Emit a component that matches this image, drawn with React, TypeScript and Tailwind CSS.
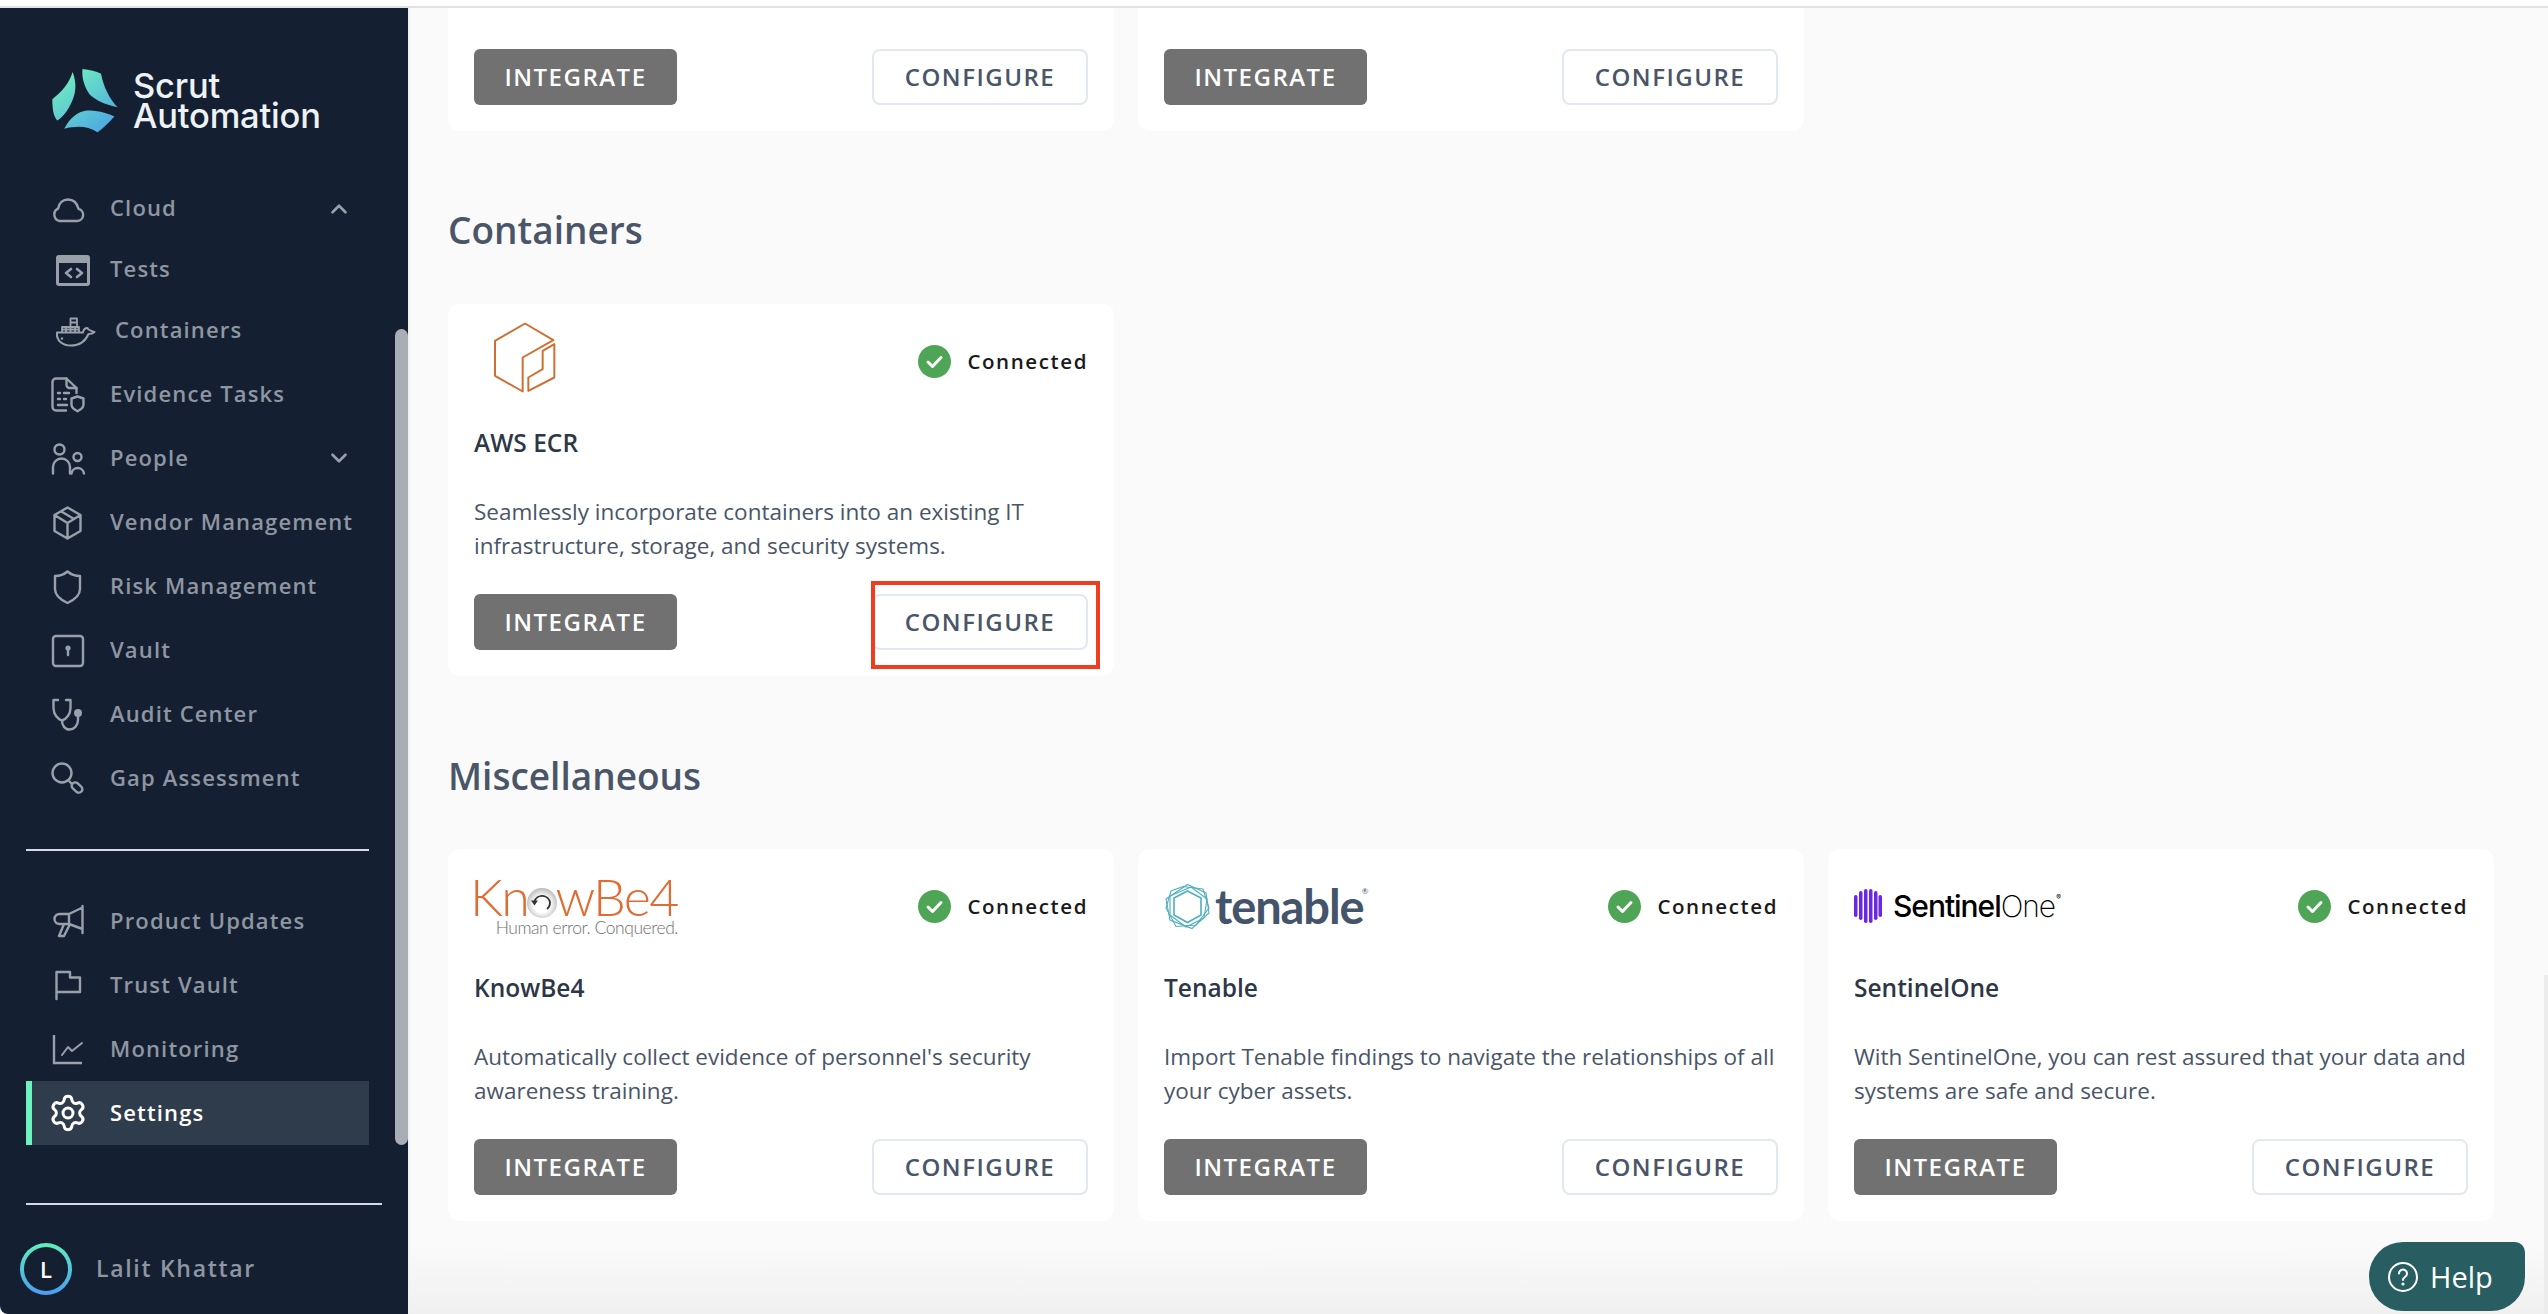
import { ReactNode } from 'react';
import { ChevronDown, ChevronUp, Settings } from 'lucide-react';

// every nav glyph sits in the same 44x36 box, so the paths share one origin
const Glyph = ({ children }: { children: ReactNode }) => (
  <svg width="44" height="36" viewBox="0 0 44 36" fill="none" stroke="currentColor" strokeWidth="2.4" strokeLinecap="round" strokeLinejoin="round" className="shrink-0 overflow-visible">
    {children}
  </svg>
);

const icons: Record<string, ReactNode> = {
  cloud: <path d="M9 30H26a6.2 6.2 0 0 0 1.5-12.2C26 12 22 8.500 17 8.500c-5 0-9 3.500-10 9.200A6.500 6.500 0 0 0 9 30Z" />,
  tests: (
    <>
      <rect x="6.500" y="4.500" width="31" height="28" rx="1.500" strokeWidth="3" />
      <path d="M6.500 8h31" strokeWidth="6" strokeLinecap="butt" />
      <path d="M20 17l-5 4 5 4M26 17l5 4-5 4" strokeWidth="2.600" />
    </>
  ),
  docker: (
    <>
      <path d="M6 19.500h26c.5-3 2.500-4.500 4.500-4.500.5 2 2.500 2.500 7 4-1.500 1.500-3.500 2-6 2-3 7-9.500 11.500-17.500 11.500C12 32.500 5 28 6 19.500Z" strokeWidth="2" />
      <path d="M11 19v-5h17v5M11 16.500h17M15 14v5M19.500 14v5M24 14v5M19.500 14V5.500H26V14M19.500 9.500H26" strokeWidth="1.800" />
      <circle cx="11" cy="25.500" r="1.200" fill="currentColor" stroke="none" />
    </>
  ),
  evidence: (
    <>
      <path d="M15 34.500H5a3.500 3.500 0 0 1-3.500-3.500V6A3.500 3.500 0 0 1 5 2.500h10.500L25.500 12v5" />
      <path d="M15.500 2.500V9a3 3 0 0 0 3 3h7M7 17h2M13 17h5M7 23h2M13 23h2M7 29h9" />
      <path d="M20.500 22.500l6-2 6 2v6c0 3-2.500 5-6 6.800-3.500-1.800-6-3.800-6-6.800Z" />
    </>
  ),
  people: (
    <>
      <circle cx="8.500" cy="9.500" r="5" />
      <path d="M2 33.500V27a8.500 8.500 0 0 1 17 0v6.500" />
      <circle cx="26.500" cy="17" r="4" />
      <path d="M20.500 33.500a6.300 6.300 0 0 1 12.500 0" />
    </>
  ),
  vendor: <path d="M16.500 3.500 29.500 11v16l-13 7.500-13-7.500V11ZM3.500 11l13 8 13-8M16.500 19v15.500M10 7.300 23 15" />,
  risk: <path d="M16.500 3.500c3.500 3 8.500 4.500 12.500 4.500v13c0 6-6 11-12.500 14C10 32 4 27 4 21V8c4 0 9-1.500 12.500-4.500Z" />,
  vault: (
    <>
      <rect x="2" y="4" width="30" height="30" rx="3" />
      <circle cx="17" cy="16" r="2.600" fill="currentColor" stroke="none" />
      <path d="M17 17v6" />
    </>
  ),
  audit: (
    <>
      <path d="M7 4H2.500v8c0 6 4 11 8.500 12.500 4.500-1.500 8.500-6.500 8.500-12.500V4H15" />
      <path d="M11 24.500c0 5 3 9 7.500 9s8.500-4 8.500-9.500v-4" />
      <circle cx="27" cy="17" r="4" fill="currentColor" stroke="none" />
    </>
  ),
  gap: (
    <>
      <circle cx="11" cy="13" r="9.500" />
      <path d="M18 21l3 3" />
      <rect x="20" y="24" width="12" height="7" rx="3.500" transform="rotate(42 26 27.500)" />
    </>
  ),
  updates: <path d="M31.500 3v27M31.500 4.500 18 11H8.500a4.500 4.500 0 0 0 0 10H18l13.500 5M18 11v10M13 21 8 33h5l6-12" />,
  trust: <path d="M5.500 32V5H19v5.500h10V25H5.500" />,
  monitoring: (
    <>
      <path d="M3 4v28h28" strokeLinecap="butt" strokeLinejoin="miter" />
      <path d="M11 24l6-8 4 4 10-8" strokeWidth="2" />
    </>
  ),
};

const navTop = [
  { id: 'cloud', label: 'Cloud', chevron: 'up', h: 'h-[61px]' },
  { id: 'tests', label: 'Tests', h: 'h-[61px]' },
  { id: 'docker', label: 'Containers', h: 'h-[61px] mb-[1px]', wide: true },
  { id: 'evidence', label: 'Evidence Tasks' },
  { id: 'people', label: 'People', chevron: 'down' },
  { id: 'vendor', label: 'Vendor Management' },
  { id: 'risk', label: 'Risk Management' },
  { id: 'vault', label: 'Vault' },
  { id: 'audit', label: 'Audit Center' },
  { id: 'gap', label: 'Gap Assessment' },
];

const navBottom = [
  { id: 'updates', label: 'Product Updates' },
  { id: 'trust', label: 'Trust Vault' },
  { id: 'monitoring', label: 'Monitoring' },
];

type NavEntry = { id: string; label: string; chevron?: string; h?: string; wide?: boolean };

function NavRow({ item }: { item: NavEntry }) {
  return (
    <div className={`flex w-[352px] items-center pl-[51px] ${item.h || 'h-[64px]'}`}>
      <div className={`text-[#9aa0aa] ${item.wide ? 'w-[64px]' : 'w-[59px]'} shrink-0`}>
        <Glyph>{icons[item.id]}</Glyph>
      </div>
      <span className="pb-[2px] text-[22px] font-semibold tracking-[1.15px] text-[#8f96a1] whitespace-nowrap">{item.label}</span>
      {item.chevron === 'up' && <ChevronUp size={26} strokeWidth={2.4} className="ml-auto text-[#9aa0aa]" />}
      {item.chevron === 'down' && <ChevronDown size={26} strokeWidth={2.4} className="ml-auto text-[#9aa0aa]" />}
    </div>
  );
}

function ScrutLogo() {
  return (
    <div className="flex h-[64px] items-center pl-[51px]">
      <svg width="68" height="67" viewBox="60 50 205 200" className="shrink-0">
        <defs>
          <linearGradient id="scrut" gradientUnits="userSpaceOnUse" x1="90" y1="60" x2="230" y2="250">
            <stop offset="0" stopColor="#72f2bd" />
            <stop offset="1" stopColor="#4ca4e4" />
          </linearGradient>
        </defs>
        <path fill="url(#scrut)" d="M155 55C178 58 196 62 211 69C217 105 236 145 261 170C225 163 195 150 176 131C160 108 152 80 155 55Z" />
        <path fill="url(#scrut)" d="M125 64C137 95 137 125 122 155C112 178 98 198 79 210C70 200 64 185 64 146C90 125 115 100 125 64Z" />
        <path fill="url(#scrut)" d="M100 235C115 205 140 183 168 180C195 180 225 185 251 198C235 215 220 232 200 246C170 225 135 227 100 235Z" />
      </svg>
      <div className="mt-[1px] ml-[14px] font-['Inter',sans-serif] text-[34.500px] leading-[30px] font-medium tracking-[-0.2px] text-[#eef2f7]">
        <div>Scrut</div>
        <div>Automation</div>
      </div>
    </div>
  );
}

function Sidebar() {
  return (
    <aside className="relative flex h-full w-[410px] shrink-0 flex-col rounded-bl-lg border-r-2 border-[#f1f1f1] bg-[#142032] pt-[60px]">
      <ScrutLogo />
      <nav className="mt-[46px]">
        {navTop.map((item) => (
          <NavRow key={item.id} item={item} />
        ))}
      </nav>
      <div className="mt-[39px] ml-[26px] h-[2px] w-[343px] bg-[#d5dbe6]" />
      <div className="mt-[38px]">
        {navBottom.map((item) => (
          <NavRow key={item.id} item={item} />
        ))}
        <div className="ml-[26px] flex h-[64px] w-[343px] items-center border-l-[6px] border-[#6ef3bf] bg-[#2f3c4b] pl-[16px] text-white">
          <Settings size={40} strokeWidth={1.8} className="shrink-0" />
          <span className="ml-[22px] pb-[2px] text-[22px] font-semibold tracking-[1.15px]">Settings</span>
        </div>
      </div>
      <div className="mt-[58px] ml-[26px] h-[2px] w-[356px] bg-[#d5dbe6]" />
      <div className="mt-[38px] flex items-center pl-[20px]">
        <div className="flex h-[52px] w-[52px] items-center justify-center rounded-full bg-gradient-to-b from-[#63efb9] to-[#4c9bef] p-[4px]">
          <div className="flex h-full w-full items-center justify-center rounded-full bg-[#142032] text-[22px] font-semibold text-white">L</div>
        </div>
        <span className="ml-[24px] pb-[2px] text-[23px] font-semibold tracking-[1.7px] text-[#8f96a1]">Lalit Khattar</span>
      </div>
      {/* sidebar scroll thumb */}
      <div className="absolute top-[321px] left-[395px] h-[816px] w-[13px] rounded-full bg-[#a9adb5]" />
    </aside>
  );
}

const EcrLogo = () => (
  <svg width="70" height="77" viewBox="60 30 210 230" fill="none" stroke="#cf7033" strokeWidth="6" strokeLinejoin="round" className="ml-[16px] -mt-[7px]">
    <path d="M165 43 250 93 158 145V247L75 200V95Z" />
    <path d="M175 205 218 180V125L253 105V205L175 245Z" />
  </svg>
);

const KnowBe4Logo = () => (
  <div className="w-[204px] font-['Lato',sans-serif] leading-none">
    <div className="-ml-[4px] flex h-[40px] items-baseline text-[52px] leading-[40px] font-light tracking-[-1.7px] text-[#e06c33] whitespace-nowrap">
      Kn
      <span className="relative text-transparent">
        o
        <svg width="30" height="30" viewBox="0 0 30 30" className="absolute top-[12px] left-[-1px]">
          <defs>
            <radialGradient id="kb4" cx="0.5" cy="0.55" r="0.55">
              <stop offset="0.5" stopColor="#ffffff" />
              <stop offset="1" stopColor="#b9b9b9" />
            </radialGradient>
          </defs>
          <circle cx="15" cy="15" r="15" fill="url(#kb4)" />
          <path d="M7.500 13.500a8 8 0 0 1 15.500 1c0 3-1 5-3 6.500" fill="none" stroke="#333" strokeWidth="1.800" />
          <path d="M4 12.500h7l-3.500 5Z" fill="#333" />
        </svg>
      </span>
      wBe4
    </div>
    <div className="mt-[3px] text-right text-[17.500px] font-light tracking-[-0.45px] text-[#6f6f6f] whitespace-nowrap">Human error. Conquered.</div>
  </div>
);

const TenableLogo = () => (
  <div className="flex items-center">
    <svg width="47" height="47" viewBox="0 0 47 47" fill="none" stroke="#4fb0bd" strokeWidth="1.100" className="shrink-0">
      <path d="M23.500 1.500 42 10l3 20-17 15.500L6 37 2 16Z" />
      <path d="M19 3.500 39 6l6 19-13 17-20 1.500L2 25l5-17Z" />
      <path d="M27 4 43 16l-3 19-18 9L6 32V13Z" />
      <path d="M23.500 8 37 15v17l-13.500 7.500L10 32V15Z" strokeWidth="1.600" />
    </svg>
    <span className="relative ml-[4px] font-['Lato',sans-serif] text-[47px] leading-[47px] font-bold tracking-[-1.1px] text-[#44546a]">
      tenable<span className="absolute top-[4px] -right-[5px] text-[8px] leading-none font-normal tracking-normal">®</span>
    </span>
  </div>
);

const SentinelLogo = () => (
  <div className="flex items-center">
    <svg width="28" height="34" viewBox="0 0 28 34" fill="#6b27e8" className="shrink-0">
      <rect x="0" y="6" width="3.500" height="22" rx="1.700" />
      <rect x="5" y="2" width="3.500" height="29" rx="1.700" />
      <rect x="10" y="0" width="3.500" height="34" rx="1.700" />
      <rect x="15" y="0" width="3.500" height="34" rx="1.700" />
      <rect x="20" y="2" width="3.500" height="29" rx="1.700" />
      <rect x="24.500" y="6" width="3.500" height="22" rx="1.700" />
    </svg>
    <span className="relative ml-[11px] font-['Inter',sans-serif] text-[30px] leading-none tracking-[-1.05px] text-black whitespace-nowrap">
      <span className="font-medium">Sentinel</span>
      <span className="font-extralight">One</span>
      <span className="absolute top-[3px] -right-[6px] text-[7px] leading-none tracking-normal">®</span>
    </span>
  </div>
);

type Integration = { title: string; desc: string; logo?: ReactNode; connected?: boolean; marked?: boolean };

function Card({ item }: { item: Integration }) {
  return (
    <div className="relative flex h-[372px] w-[666px] flex-col rounded-xl bg-white px-[26px] pt-[26px] pb-[26px]">
      <div className="flex h-[62px] items-center justify-between">
        {item.logo}
        {item.connected && (
          <div className="flex items-center">
            <svg width="33" height="33" viewBox="0 0 33 33" className="mt-[1px]">
              <circle cx="16.500" cy="16.500" r="16.500" fill="#4ea556" />
              <path d="M10 17l4.500 4.500L23 12.500" fill="none" stroke="#fff" strokeWidth="3" strokeLinecap="round" strokeLinejoin="round" />
            </svg>
            <span className="ml-[16px] text-[20.500px] font-semibold tracking-[1.6px] text-[#1a1a1a]">Connected</span>
          </div>
        )}
      </div>
      <h3 className="mt-[33px] text-[24.500px] leading-[36px] font-semibold text-[#2d3748]">{item.title}</h3>
      <p className="mt-[34px] text-[22.500px] leading-[33.500px] whitespace-pre-line text-[#4a5568]">{item.desc}</p>
      <div className="mt-auto flex items-center justify-between">
        <button className="h-[56px] w-[203px] rounded-md bg-[#717171] text-[24px] font-semibold tracking-[1.5px] text-white">INTEGRATE</button>
        <button className="h-[56px] w-[216px] rounded-lg border-2 border-[#e2e8f0] bg-white text-[24px] font-semibold tracking-[1.5px] text-[#4a5568]">CONFIGURE</button>
      </div>
      {item.marked && <div className="absolute top-[277px] left-[423px] h-[88px] w-[229px] border-4 border-[#ee3e1f]" />}
    </div>
  );
}

const endpointCards: Integration[] = [
  { title: '', desc: '\u00a0\ndevices.' },
  { title: '', desc: '\u00a0\nreal-time data from all your endpoints/ devices.' },
];

const containerCards: Integration[] = [
  {
    title: 'AWS ECR',
    desc: 'Seamlessly incorporate containers into an existing IT infrastructure, storage, and security systems.',
    logo: <EcrLogo />,
    connected: true,
    marked: true,
  },
];

const miscCards: Integration[] = [
  {
    title: 'KnowBe4',
    desc: "Automatically collect evidence of personnel's security awareness training.",
    logo: <KnowBe4Logo />,
    connected: true,
  },
  {
    title: 'Tenable',
    desc: 'Import Tenable findings to navigate the relationships of all your cyber assets.',
    logo: <TenableLogo />,
    connected: true,
  },
  {
    title: 'SentinelOne',
    desc: 'With SentinelOne, you can rest assured that your data and systems are safe and secure.',
    logo: <SentinelLogo />,
    connected: true,
  },
];

function CardGrid({ items }: { items: Integration[] }) {
  return (
    <div className="grid grid-cols-[repeat(3,666px)] gap-x-6">
      {items.map((item, idx) => (
        <Card key={idx} item={item} />
      ))}
    </div>
  );
}

export default function App() {
  return (
    <div className="flex h-screen flex-col overflow-hidden bg-white font-['Open_Sans',sans-serif]">
      <div className="h-[6px] shrink-0 bg-white" />
      <div className="h-[2px] shrink-0 bg-[#e2e2e2]" />
      <div className="flex min-h-0 flex-1">
        <Sidebar />
        <main className="relative min-w-0 flex-1 overflow-hidden bg-[#fafafa] pl-[38px]">
          <div className="-mt-[249px]">
            <CardGrid items={endpointCards} />
            <h2 className="mt-[75px] mb-[50px] text-[37px] leading-[48px] font-semibold text-[#4a5568]">Containers</h2>
            <CardGrid items={containerCards} />
            <h2 className="mt-[76px] mb-[49px] text-[37px] leading-[48px] font-semibold text-[#4a5568]">Miscellaneous</h2>
            <CardGrid items={miscCards} />
          </div>
          <div className="absolute inset-x-0 bottom-0 h-[70px] bg-gradient-to-b from-transparent to-[#f0f0f0]" />
          <div className="absolute top-[967px] right-0 bottom-0 w-[4px] bg-[#ececec]" />
          <button className="absolute top-[1234px] left-[1959px] flex h-[69px] w-[156px] items-center rounded-[34px] rounded-tr-[10px] bg-[#285e61] pl-[19px] text-white">
            <svg width="30" height="30" viewBox="0 0 30 30" fill="none" stroke="currentColor" strokeWidth="2" strokeLinecap="round">
              <circle cx="15" cy="15" r="14" />
              <path d="M11 11.500a4 4 0 1 1 6 3.500c-1.500 1-2 1.500-2 3" />
              <circle cx="15" cy="22" r="0.600" fill="currentColor" />
            </svg>
            <span className="ml-[12px] text-[29px] leading-none font-medium">Help</span>
          </button>
        </main>
      </div>
    </div>
  );
}
